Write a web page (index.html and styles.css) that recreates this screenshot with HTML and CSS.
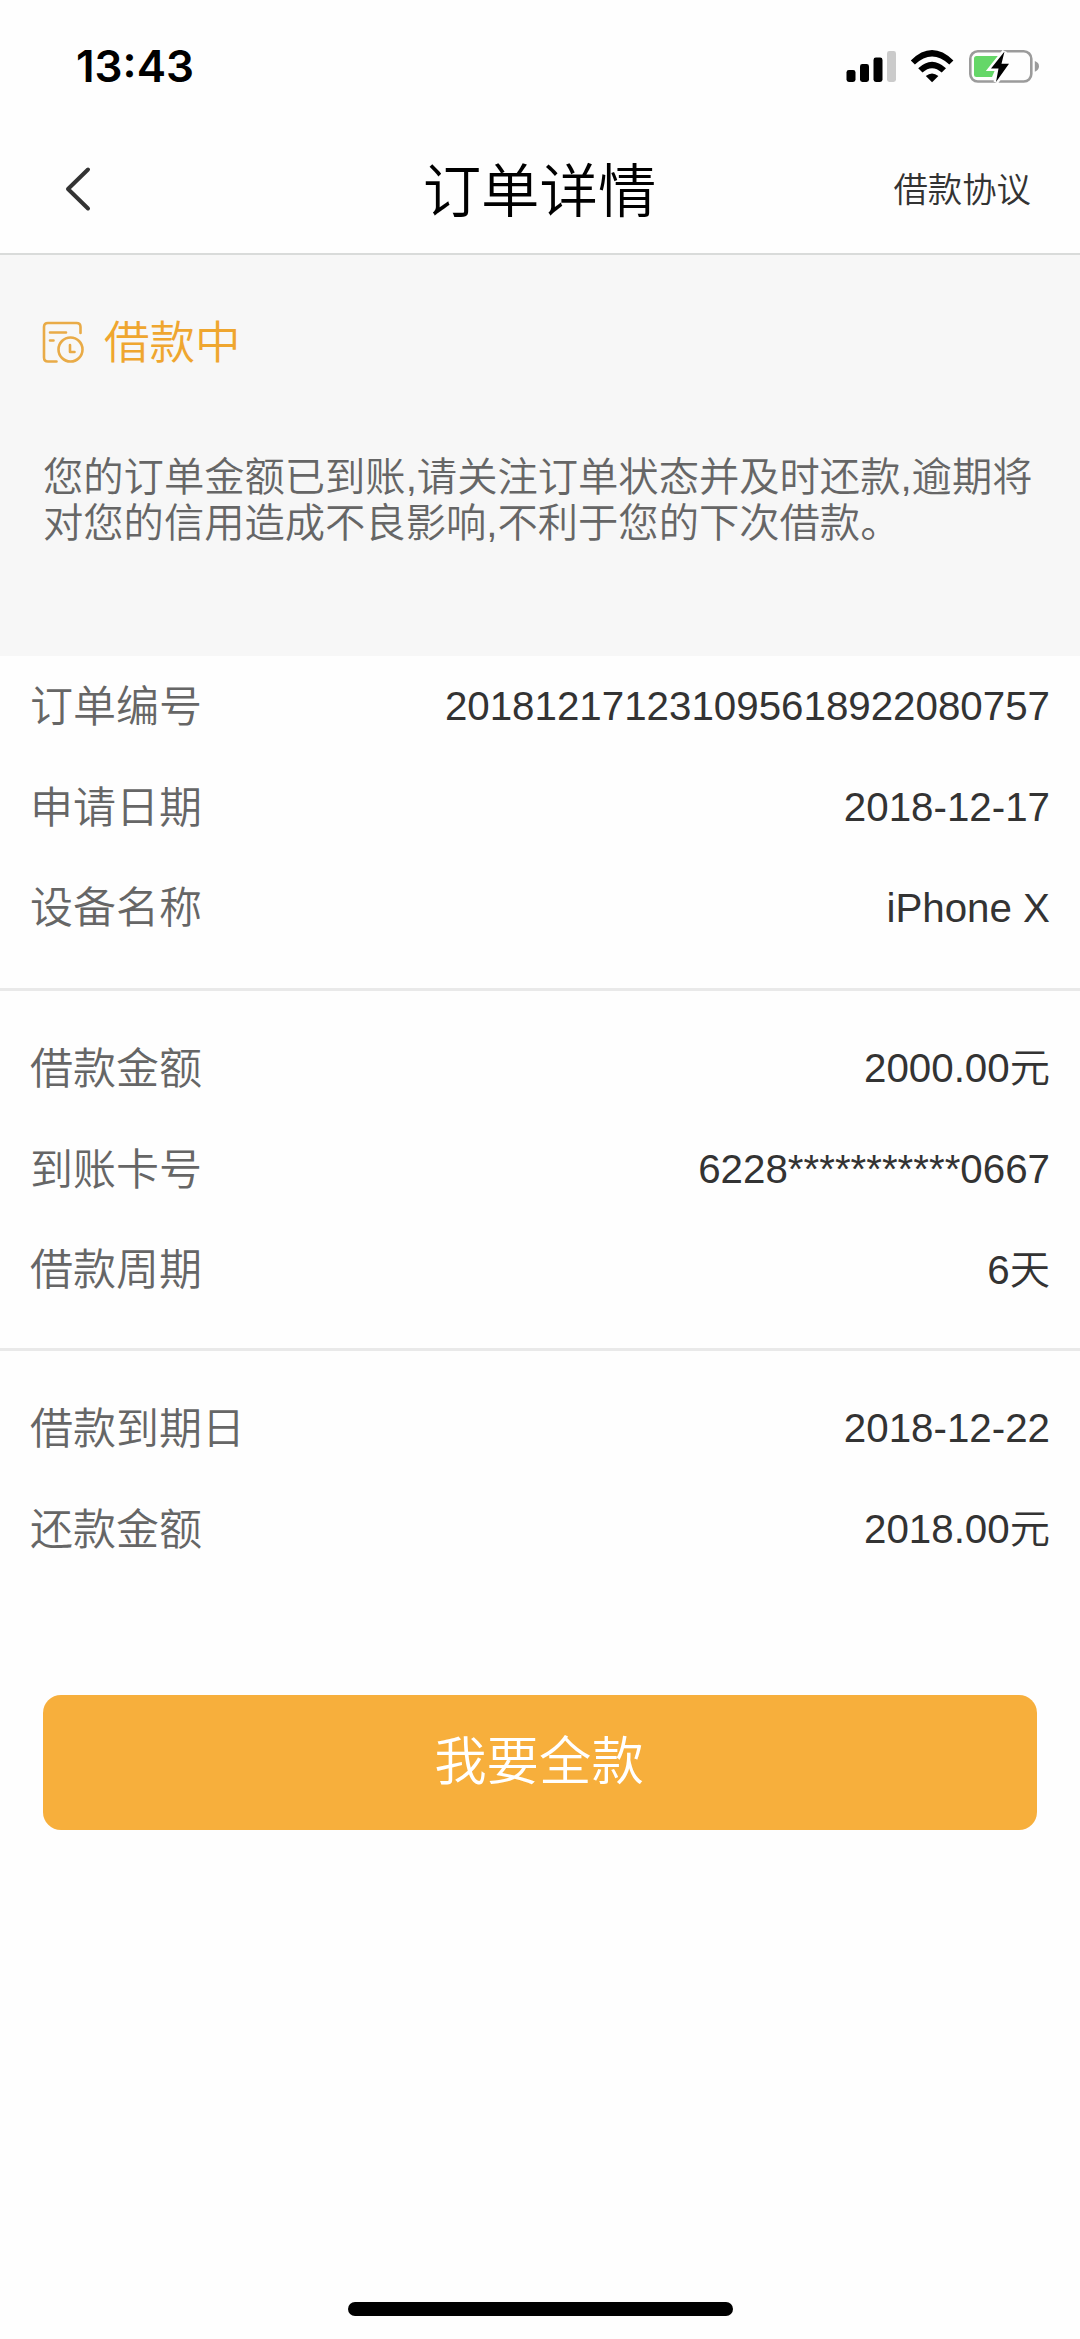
FILE: index.html
```html
<!DOCTYPE html>
<html lang="zh-CN">
<head>
<meta charset="utf-8">
<title>订单详情</title>
<link rel="stylesheet" href="styles.css">
</head>
<body>
<div class="screen">
  <div class="status-bar">
    <span class="clock">13:43</span>
    <svg class="status-icons" width="194" height="36" viewBox="846 48 194 36">
      <rect x="846.5" y="70" width="9" height="12" rx="2.4"/>
      <rect x="860" y="64" width="9" height="18" rx="2.4"/>
      <rect x="873.5" y="57.5" width="9" height="24.5" rx="2.4"/>
      <rect x="887" y="51" width="9" height="31" rx="2.4" fill="#cbcbcb"/>
      <path d="M910.8 60.4Q932 39.6 953.4 60.4L949.3 64.6Q932 48.6 914.9 64.6Z"/>
      <path d="M918.2 68.2Q932 55.2 946 68.2L941.7 72.5Q932 64 922.5 72.5Z"/>
      <path d="M925.8 76Q932 70.8 938.4 76L932.1 82.2Z"/>
      <rect x="970.3" y="51.3" width="61" height="30.2" rx="7.5" fill="none" stroke="#9b9b9b" stroke-width="2.6"/>
      <path d="M1034.8 61Q1039 62.5 1039 66.3Q1039 70.2 1034.8 71.7Z" fill="#9b9b9b"/>
      <path d="M976.5 56H1001L992 77H976.5Q974 77 974 74.5V58.5Q974 56 976.5 56Z" fill="#65d768"/>
      <path d="M1004.5 51.5L991 68.5H998.5L996 82L1009 63.8H1001.5Z" stroke="#fefefe" stroke-width="5"/>
      <path d="M1004.5 51.5L991 68.5H998.5L996 82L1009 63.8H1001.5Z"/>
    </svg>
  </div>
  <header class="nav">
    <svg class="back" width="28" height="46" viewBox="0 0 28 46"><path d="M24 3.5L4 23L24 42.5" fill="none" stroke="#333" stroke-width="4" stroke-linecap="round" stroke-linejoin="round"/></svg>
    <h1 class="title">订单详情</h1>
    <a class="agreement">借款协议</a>
  </header>
  <section class="notice">
    <div class="state">
      <svg width="42" height="42" viewBox="0 0 42 42" fill="none" stroke="#e9ab47" stroke-width="2.6" stroke-linecap="round" stroke-linejoin="round">
        <path d="M38.500 12V6Q38.500 2 34.500 2H6Q2 2 2 6V36.500Q2 40.500 6 40.500H14.500"/>
        <path d="M8 11.500H24M8 19.500H11.500"/>
        <circle cx="28.500" cy="28.500" r="12"/>
        <path d="M28 24V31H32.500"/>
      </svg>
      <span class="state-name">借款中</span>
    </div>
    <p class="message">您的订单金额已到账,请关注订单状态并及时还款,逾期将对您的信用造成不良影响,不利于您的下次借款。</p>
  </section>
  <dl class="group group-first">
    <div class="row"><dt>订单编号</dt><dd>201812171231095618922080757</dd></div>
    <div class="row"><dt>申请日期</dt><dd>2018-12-17</dd></div>
    <div class="row"><dt>设备名称</dt><dd>iPhone X</dd></div>
  </dl>
  <dl class="group">
    <div class="row"><dt>借款金额</dt><dd>2000.00元</dd></div>
    <div class="row"><dt>到账卡号</dt><dd>6228***********0667</dd></div>
    <div class="row"><dt>借款周期</dt><dd>6天</dd></div>
  </dl>
  <dl class="group group-last">
    <div class="row"><dt>借款到期日</dt><dd>2018-12-22</dd></div>
    <div class="row"><dt>还款金额</dt><dd>2018.00元</dd></div>
  </dl>
  <button class="pay">我要全款</button>
  <div class="home-indicator"></div>
</div>
</body>
</html>
```
FILE: styles.css
```css
* {
  box-sizing: border-box;
}

body {
  margin: 0;
  background: #fefefe;
  font-family: "Liberation Sans", "Noto Sans CJK SC", sans-serif;
  font-weight: 350;
}

.screen {
  display: flex;
  flex-direction: column;
  height: 2339px;
}

.status-bar {
  display: flex;
  align-items: center;
  justify-content: space-between;
  height: 126px;
  padding: 6px 40px 0 76px;
}

.clock {
  font: 600 44px/1 Inter, sans-serif;
}

.nav {
  display: grid;
  grid-template-columns: 1fr auto 1fr;
  align-items: center;
  height: 129px;
  padding: 0 49px 2px 64px;
  border-bottom: 2px solid #d9dbda;
}

.title {
  margin: 0 16px 0 0;
  padding-top: 6px;
  font-size: 58.4px;
  font-weight: 350;
  line-height: 84px;
  color: #000;
}

.agreement {
  justify-self: end;
  padding-top: 3px;
  font-size: 34.4px;
  line-height: 50px;
  color: #333;
}

.notice {
  height: 401px;
  padding: 53px 44px 0 42px;
  background: #f7f7f7;
}

.state {
  display: flex;
  align-items: center;
  gap: 20px;
  height: 68px;
}

.state-name {
  padding-top: 4px;
  font-size: 45.5px;
  line-height: 64px;
  color: #efa62f;
}

.message {
  margin: 79px 0 0 1px;
  width: 996px;
  font-size: 40.3px;
  line-height: 46px;
  color: #666;
}

.group {
  margin: 0;
  padding: 27px 30px 28px;
  border-bottom: 3px solid #e9e9e9;
}

.group-first {
  padding: 0 30px 30px;
}

.group-last {
  border-bottom: 0;
}

.row {
  display: flex;
  align-items: center;
  justify-content: space-between;
  height: 100.7px;
}

dt {
  padding-top: 1px;
  font-size: 43px;
  line-height: 50px;
  color: #666;
}

dd {
  margin: 0;
  padding-top: 2px;
  font-size: 40.3px;
  line-height: 50px;
  color: #333;
}

.pay {
  height: 135px;
  margin: 87px 43px 0;
  padding: 0 2px 0 0;
  border: 0;
  border-radius: 18px;
  background: #f7af3c;
  color: #fff;
  font: inherit;
  font-size: 52.4px;
  line-height: 135px;
}

.home-indicator {
  width: 385px;
  height: 14px;
  margin: auto auto 23px;
  border-radius: 7px;
  background: #000;
}
```
